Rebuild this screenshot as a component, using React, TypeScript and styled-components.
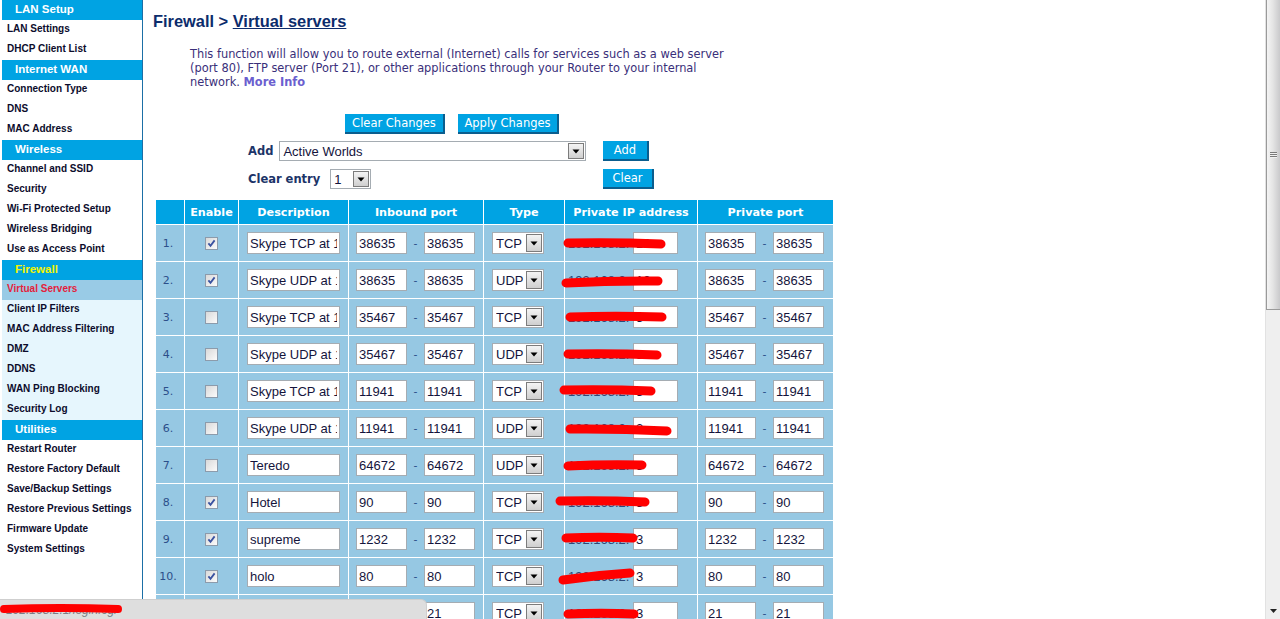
import styled, { createGlobalStyle } from 'styled-components';

const GlobalStyle = createGlobalStyle`
  html, body {
    margin: 0;
    padding: 0;
    background: #fff;
  }
  body {
    font-family: "DejaVu Sans", Verdana, sans-serif;
  }
`;

const Page = styled.div`
  position: relative;
  display: flex;
  width: 1280px;
  height: 619px;
  overflow: hidden;
  background: #fff;
`;

/* ---------- sidebar ---------- */

const Sidebar = styled.nav`
  flex-shrink: 0;
  width: 140px;
  padding-left: 2px;
  border-right: 1px solid #1b6fa6;
`;

const Group = styled.div<{ tinted?: boolean }>`
  background: ${(p) => (p.tinted ? '#e6f6fd' : '#fff')};
`;

const GroupHead = styled.div<{ yellow?: boolean }>`
  height: 20px;
  padding-left: 13px;
  background: #00a3e3;
  color: ${(p) => (p.yellow ? '#f4f400' : '#fff')};
  font: bold 11.5px/19px "Liberation Sans", Arial, sans-serif;
`;

const GroupItem = styled.div<{ active?: boolean }>`
  height: 20px;
  padding-left: 5px;
  background: ${(p) => (p.active ? '#99cbe6' : 'transparent')};
  color: ${(p) => (p.active ? '#e41e3c' : '#0c0c2c')};
  font: bold 10px/17px "Liberation Sans", Arial, sans-serif;
  white-space: nowrap;
`;

/* ---------- main ---------- */

const Main = styled.main`
  flex: 1;
  min-width: 0;
  padding-left: 10px;
`;

const Title = styled.h1`
  margin: 12px 0 0;
  font: bold 16.4px/19px "Liberation Sans", Arial, sans-serif;
  color: #0c2c6c;

  span {
    text-decoration: underline;
  }
`;

const Intro = styled.p`
  margin: 16px 0 0 37px;
  width: 552px;
  font-size: 11.4px;
  line-height: 14px;
  color: #3a2f7a;

  b {
    color: #6b5fcf;
  }
`;

const ButtonRow = styled.div`
  display: flex;
  gap: 13px;
  margin-top: 25px;
  padding-left: 192px;
`;

const BlueButton = styled.button<{ w: number }>`
  width: ${(p) => p.w}px;
  height: 20px;
  padding: 0;
  border: none;
  border-right: 2px solid #0b5e8e;
  border-bottom: 2px solid #0b5e8e;
  background: #00a3e3;
  color: #fff;
  font-family: "DejaVu Sans", Verdana, sans-serif;
  font-size: 11.5px;
  line-height: 18px;
`;

const FormRow = styled.div<{ top: number }>`
  display: flex;
  align-items: center;
  margin-top: ${(p) => p.top}px;
  padding-left: 95px;
  height: 20px;
`;

const Field = styled.div`
  display: flex;
  align-items: center;
  width: 355px;
`;

const FieldLabel = styled.label<{ gap: number }>`
  margin-right: ${(p) => p.gap}px;
  font-weight: bold;
  font-size: 11.5px;
  color: #1c3468;
`;

const SelectBox = styled.div<{ w: number; h: number }>`
  display: flex;
  align-items: center;
  box-sizing: border-box;
  width: ${(p) => p.w}px;
  height: ${(p) => p.h}px;
  padding: 1px 1px 1px 3px;
  border: 1px solid #a5acb2;
  background: #fff;
  font: 13px "Liberation Sans", Arial, sans-serif;
  color: #14143c;

  span {
    flex: 1;
    min-width: 0;
    overflow: hidden;
    white-space: nowrap;
  }
`;

const Arrow = styled.div`
  flex-shrink: 0;
  display: flex;
  align-items: center;
  justify-content: center;
  box-sizing: border-box;
  width: 16px;
  height: 100%;
  border: 1px solid #7c7c7c;
  background: linear-gradient(#f4f4f4, #cfcfcf);
`;

const Select = ({ value, w, h }: { value: string; w: number; h: number }) => (
  <SelectBox w={w} h={h}>
    <span>{value}</span>
    <Arrow>
      <svg width="8" height="5" viewBox="0 0 8 5">
        <path d="M0.5 0.5h7L4 4.5z" fill="#000" />
      </svg>
    </Arrow>
  </SelectBox>
);

/* ---------- table ---------- */

const Grid = styled.table`
  margin: 10px 0 0 2px;
  border-collapse: separate;
  border-spacing: 1px;
  table-layout: fixed;
  width: 679px;
`;

const Th = styled.th`
  height: 24px;
  padding: 0;
  background: #00a3e3;
  color: #fff;
  font-size: 11.2px;
  font-weight: bold;
  text-align: center;
  white-space: nowrap;
`;

const Td = styled.td`
  height: 36px;
  padding: 0;
  background: #96c8e3;
  vertical-align: middle;
`;

const Num = styled.div`
  padding-right: 4px;
  text-align: center;
  font-size: 11px;
  color: #2c4f8a;
`;

const CellRow = styled.div<{ pad: number }>`
  position: relative;
  display: flex;
  align-items: center;
  height: 22px;
  padding-left: ${(p) => p.pad}px;
`;

const TextBox = styled.input<{ w: number }>`
  box-sizing: border-box;
  width: ${(p) => p.w}px;
  height: 22px;
  margin: 0;
  padding: 0 2px;
  border: 1px solid #a5acb2;
  background: #fff;
  font: 13px "Liberation Sans", Arial, sans-serif;
  color: #14143c;
  outline: none;
`;

const Dash = styled.span`
  width: 17px;
  text-align: center;
  font-size: 11px;
  color: #2c4f8a;
`;

const Box = styled.span`
  display: flex;
  align-items: center;
  justify-content: center;
  box-sizing: border-box;
  width: 13px;
  height: 13px;
  margin: 0 auto;
  border: 1px solid #8c9bab;
  background: linear-gradient(135deg, #d9d9d9, #fbfbfb);
`;

const CheckBox = ({ on }: { on: boolean }) => (
  <Box>
    {on && (
      <svg width="11" height="11" viewBox="0 0 11 11">
        <path d="M2.4 5.4l2.1 2.4L8.6 2.4" stroke="#3a52a0" strokeWidth="1.8" fill="none" />
      </svg>
    )}
  </Box>
);

const IpText = styled.span`
  width: 65px;
  font: 13px "Liberation Sans", Arial, sans-serif;
  color: #2d4a7a;
  white-space: nowrap;
`;

const Scribble = styled.svg<{ top: number }>`
  position: absolute;
  left: 0;
  top: ${(p) => p.top}px;
  overflow: visible;
  pointer-events: none;
`;

/* ---------- scrollbar / status ---------- */

const Scrollbar = styled.div`
  flex-shrink: 0;
  display: flex;
  flex-direction: column;
  width: 14px;
  background: #efefef;
  border-left: 1px solid #e2e2e2;
`;

const Thumb = styled.div`
  display: flex;
  align-items: center;
  justify-content: center;
  height: 309px;
  border-left: 1px solid #9a9a9a;
  border-bottom: 1px solid #9a9a9a;
  background: linear-gradient(90deg, #f4f4f4, #e4e4e4 45%, #c9c9cb);
`;

const Grip = styled.div`
  width: 7px;
  height: 6px;
  background: repeating-linear-gradient(#7a7a7a 0 1px, #f0f0f0 1px 2px);
`;

const Track = styled.div`
  flex: 1;
  display: flex;
  align-items: flex-end;
  justify-content: center;
  padding-bottom: 6px;
`;

const StatusBar = styled.div`
  position: absolute;
  left: 0;
  bottom: 0;
  box-sizing: border-box;
  width: 427px;
  height: 20px;
  padding-left: 6px;
  border-top: 1px solid #cfcfcf;
  border-right: 1px solid #cfcfcf;
  border-top-right-radius: 6px;
  background: #dedede;
  font: italic 12px/20px "Liberation Sans", Arial, sans-serif;
  color: #7a8088;
`;

/* ---------- data ---------- */

type Row = {
  desc: string;
  on: boolean;
  port: string;
  type: string;
  ip: string;
  s: [number, number, number, number];
};

const rows: Row[] = [
  { desc: 'Skype TCP at 1', on: true, port: '38635', type: 'TCP', ip: '12', s: [3, 18, 96, 19] },
  { desc: 'Skype UDP at 1', on: true, port: '38635', type: 'UDP', ip: '12', s: [1, 21, 93, 19] },
  { desc: 'Skype TCP at 1', on: false, port: '35467', type: 'TCP', ip: '3', s: [5, 18, 97, 18] },
  { desc: 'Skype UDP at 1', on: false, port: '35467', type: 'UDP', ip: '3', s: [3, 18, 92, 19] },
  { desc: 'Skype TCP at 1', on: false, port: '11941', type: 'TCP', ip: '3', s: [-1, 17, 86, 18] },
  { desc: 'Skype UDP at 1', on: false, port: '11941', type: 'UDP', ip: '3', s: [5, 19, 102, 21] },
  { desc: 'Teredo', on: false, port: '64672', type: 'UDP', ip: '3', s: [3, 19, 77, 18] },
  { desc: 'Hotel', on: true, port: '90', type: 'TCP', ip: '3', s: [-5, 17, 80, 18] },
  { desc: 'supreme', on: true, port: '1232', type: 'TCP', ip: '3', s: [1, 17, 68, 17] },
  { desc: 'holo', on: true, port: '80', type: 'TCP', ip: '3', s: [-2, 22, 65, 15] },
  { desc: 'ftp', on: true, port: '21', type: 'TCP', ip: '3', s: [3, 19, 69, 19] },
];

const nav = [
  { head: 'LAN Setup', items: ['LAN Settings', 'DHCP Client List'] },
  { head: 'Internet WAN', items: ['Connection Type', 'DNS', 'MAC Address'] },
  {
    head: 'Wireless',
    items: ['Channel and SSID', 'Security', 'Wi-Fi Protected Setup', 'Wireless Bridging', 'Use as Access Point'],
  },
  {
    head: 'Firewall',
    items: ['Virtual Servers', 'Client IP Filters', 'MAC Address Filtering', 'DMZ', 'DDNS', 'WAN Ping Blocking', 'Security Log'],
  },
  {
    head: 'Utilities',
    items: [
      'Restart Router',
      'Restore Factory Default',
      'Save/Backup Settings',
      'Restore Previous Settings',
      'Firmware Update',
      'System Settings',
    ],
  },
];

const PortPair = ({ value }: { value: string }) => (
  <CellRow pad={7}>
    <TextBox w={51} defaultValue={value} readOnly />
    <Dash>-</Dash>
    <TextBox w={51} defaultValue={value} readOnly />
  </CellRow>
);

export default function App() {
  return (
    <Page>
      <GlobalStyle />
      <Sidebar>
        {nav.map((g) => {
          const fw = g.head === 'Firewall';
          return (
            <Group key={g.head} tinted={fw}>
              <GroupHead yellow={fw}>{g.head}</GroupHead>
              {g.items.map((it) => (
                <GroupItem key={it} active={it === 'Virtual Servers'}>
                  {it}
                </GroupItem>
              ))}
            </Group>
          );
        })}
      </Sidebar>

      <Main>
        <Title>
          Firewall &gt; <span>Virtual servers</span>
        </Title>
        <Intro>
          This function will allow you to route external (Internet) calls for services such as a web server
          (port 80), FTP server (Port 21), or other applications through your Router to your internal
          network. <b>More Info</b>
        </Intro>

        <ButtonRow>
          <BlueButton w={100}>Clear Changes</BlueButton>
          <BlueButton w={101}>Apply Changes</BlueButton>
        </ButtonRow>

        <FormRow top={7}>
          <Field>
            <FieldLabel gap={6}>Add</FieldLabel>
            <Select value="Active Worlds" w={307} h={20} />
          </Field>
          <BlueButton w={46}>Add</BlueButton>
        </FormRow>
        <FormRow top={8}>
          <Field>
            <FieldLabel gap={10}>Clear entry</FieldLabel>
            <Select value="1" w={41} h={20} />
          </Field>
          <BlueButton w={51}>Clear</BlueButton>
        </FormRow>

        <Grid>
          <colgroup>
            <col style={{ width: 28 }} />
            <col style={{ width: 53 }} />
            <col style={{ width: 109 }} />
            <col style={{ width: 134 }} />
            <col style={{ width: 80 }} />
            <col style={{ width: 132 }} />
            <col style={{ width: 135 }} />
          </colgroup>
          <thead>
            <tr>
              <Th />
              <Th>Enable</Th>
              <Th>Description</Th>
              <Th>Inbound port</Th>
              <Th>Type</Th>
              <Th>Private IP address</Th>
              <Th>Private port</Th>
            </tr>
          </thead>
          <tbody>
            {rows.map((r, i) => (
              <tr key={i}>
                <Td>
                  <Num>{i + 1}.</Num>
                </Td>
                <Td>
                  <CheckBox on={r.on} />
                </Td>
                <Td>
                  <CellRow pad={8}>
                    <TextBox w={93} defaultValue={r.desc} readOnly />
                  </CellRow>
                </Td>
                <Td>
                  <PortPair value={r.port} />
                </Td>
                <Td>
                  <CellRow pad={8}>
                    <Select value={r.type} w={52} h={22} />
                  </CellRow>
                </Td>
                <Td>
                  <CellRow pad={3}>
                    <IpText>192.168.2.</IpText>
                    <TextBox w={45} defaultValue={r.ip} readOnly />
                    <Scribble top={-7} width="1" height="1">
                      <path
                        d={`M${r.s[0]} ${r.s[1]} Q${(r.s[0] + r.s[2]) / 2} ${(r.s[1] + r.s[3]) / 2 - 1.5} ${r.s[2]} ${r.s[3]}`}
                        stroke="#ff0000"
                        strokeWidth="9"
                        strokeLinecap="round"
                        fill="none"
                      />
                    </Scribble>
                  </CellRow>
                </Td>
                <Td>
                  <PortPair value={r.port} />
                </Td>
              </tr>
            ))}
          </tbody>
        </Grid>
      </Main>

      <Scrollbar>
        <Thumb>
          <Grip />
        </Thumb>
        <Track>
          <svg width="7" height="4" viewBox="0 0 7 4">
            <path d="M0 0h7L3.5 4z" fill="#222" />
          </svg>
        </Track>
      </Scrollbar>

      <StatusBar>
        192.168.2.1/login.cgi
        <Scribble top={0} width="1" height="1">
          <path d="M4 9 Q60 7 118 9" stroke="#ff0000" strokeWidth="8" strokeLinecap="round" fill="none" />
        </Scribble>
      </StatusBar>
    </Page>
  );
}
